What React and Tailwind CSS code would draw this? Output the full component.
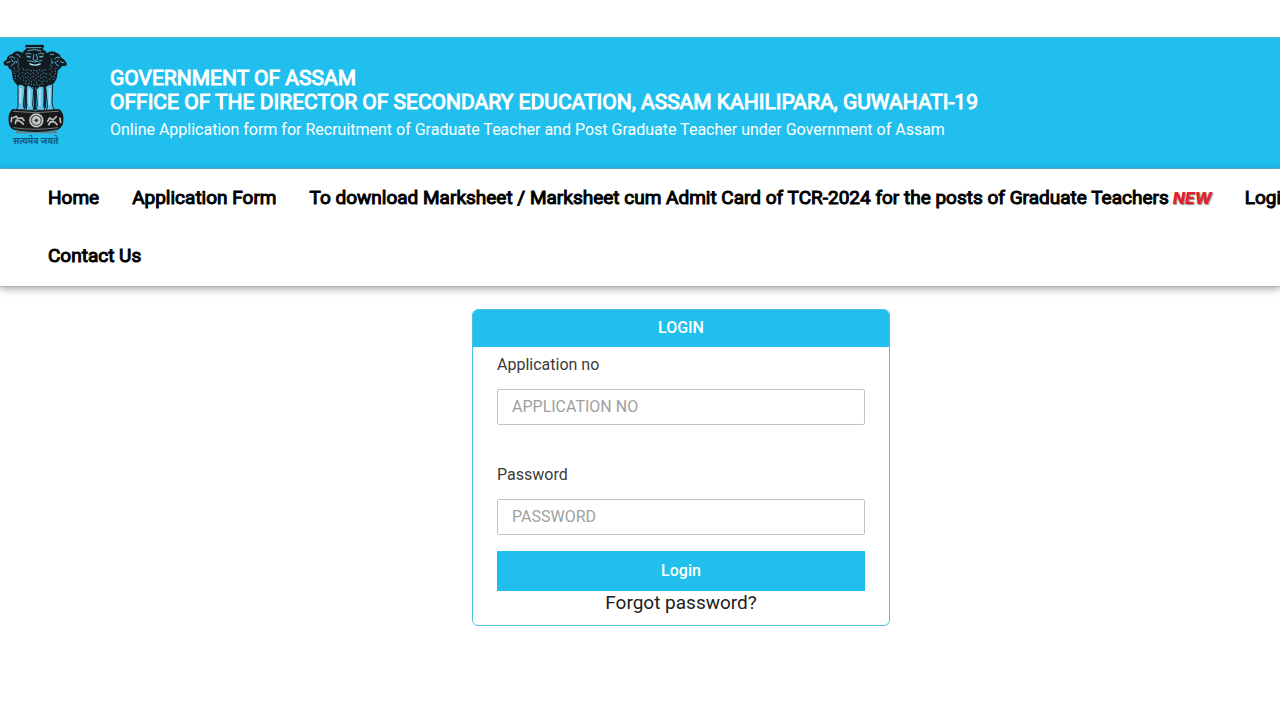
function Emblem() {
  return (
    <svg viewBox="0 30 225 330" className="h-[110px] w-[75px] shrink-0" role="img" aria-label="State Emblem of India">
      <g fill="#131b20">
        <path d="M75 47 Q78 43 90 45 L128 44 Q134 44 131 52 L128 59 Q143 63 140 76 Q148 90 140 101 Q136 111 128 113 Q104 124 78 112 Q66 106 67 94 Q59 82 69 72 Q67 62 79 57 Z" />
        <path d="M68 68 Q44 58 37 72 Q21 76 20 89 Q7 96 12 103 Q15 109 24 107 Q25 117 34 119 L39 148 Q48 170 66 170 L84 120 Z" />
        <path d="M140 69 Q159 59 169 69 Q180 70 182 81 Q194 89 200 99 Q203 110 187 107 Q182 116 174 121 L170 145 Q160 170 143 170 L122 120 Z" />
        <path d="M66 104 Q102 125 144 104 L160 137 Q156 177 142 181 L103 194 L65 181 Q48 164 49 135 Z" />
      </g>
      <g fill="#62c5ea" stroke="#15242d" strokeWidth="3">
        <path d="M54 165 Q66 159 75 172 L70 224 Q71 235 75 239 L49 240 Q57 230 54 218 Z" />
        <path d="M80 168 Q91 163 101 179 L98 225 Q103 236 99 241 L78 241 Q83 226 79 210 Z" />
        <path d="M108 179 Q119 163 132 171 L132 211 Q128 229 135 241 L111 241 Q108 233 112 225 Z" />
        <path d="M137 170 Q151 159 158 166 L156 216 Q155 231 164 239 L139 241 Q144 231 142 223 Z" />
      </g>
      <g fill="none" stroke="#58aecd" strokeWidth="3">
        <path d="M79 53 H125 M83 62 Q104 55 124 63" />
        <path d="M77 72 Q87 66 94 73 M115 73 Q122 66 132 72" />
        <path d="M80 79 L92 81 M118 81 L130 79" strokeWidth="5" />
        <path d="M102 72 L99 88 L106 92 L113 88 L109 72 M82 92 Q94 93 103 96 Q116 94 127 91" />
        <path d="M88 101 Q105 110 122 101" stroke="#a4e0ef" strokeWidth="4" />
        <path d="M28 82 Q39 76 45 86 M19 99 L32 94 M32 108 Q43 104 46 92 M49 73 Q58 73 61 83 M34 88 L40 96 M52 92 L48 100" />
        <path d="M180 83 Q171 77 164 87 M193 99 L180 95 M177 108 Q166 104 164 94 M150 74 Q157 71 162 75 M175 89 L170 97 M155 92 L159 101" />
      </g>
      <g fill="none" stroke="#4593b0" strokeWidth="3" strokeDasharray="5 5">
        <path d="M51 85 L57 90 L50 96 L59 102 L51 109 L60 116 L52 123 L60 130 L54 137 L62 144 L57 151" />
        <path d="M157 86 L151 91 L158 97 L149 104 L158 110 L149 118 L156 125 L149 132 L156 139 L148 147 L153 154" />
        <path d="M42 112 L46 120 L40 127 L48 134 L44 143 L51 151 M169 114 L164 122 L169 129 L161 136 L165 144 L157 151" />
        <path d="M68 116 L76 122 L84 117 L91 124 L100 119 L108 125 L116 119 L124 124 L132 118 L141 123" />
        <path d="M66 127 L73 133 L82 127 L90 134 L98 128 L106 135 L114 128 L122 135 L131 128 L142 133" />
        <path d="M67 138 L75 144 L83 138 L91 145 L99 138 L107 146 L116 139 L124 145 L133 138 L142 144" />
        <path d="M69 149 L77 155 L85 149 L93 156 L101 149 L109 157 L118 150 L126 156 L134 150 L143 155" />
        <path d="M75 160 L83 164 L90 159 L99 166 L108 161 L117 167 L125 161 L134 163 M96 172 L103 177 L111 172" />
      </g>
      <path d="M62 174 L61 220 M88 177 L89 228 M120 177 L119 227 M149 174 L148 224" stroke="#b5e4f2" strokeWidth="5" fill="none" />
      <path d="M105 181 V240 M76 181 V234 M135 181 V233" stroke="#14232b" strokeWidth="6" fill="none" />
      <path d="M38 237 Q106 247 177 237 Q193 248 190 273 Q190 289 174 299 Q106 313 40 299 Q26 291 26 272 Q23 249 38 237 Z" fill="#18191a" />
      <path d="M39 244 Q106 252 176 244 M40 293 Q106 303 174 293" stroke="#777" strokeWidth="3" fill="none" />
      <circle cx="109" cy="271" r="22" fill="#d2d6d7" stroke="#303334" strokeWidth="2" />
      <circle cx="109" cy="271" r="15" fill="none" stroke="#4b4e50" strokeWidth="4" />
      <path d="M109 254 V288 M92 271 H126 M97 259 L121 283 M121 259 L97 283" stroke="#999" strokeWidth="2" />
      <circle cx="109" cy="271" r="5" fill="#333" />
      <g fill="none" stroke="#bfc2c3" strokeWidth="5" strokeLinecap="round">
        <path d="M40 263 L48 259 L54 266 L66 264 L72 271 M46 280 L49 270 L62 275 L70 282 M34 275 L35 263" />
        <path d="M143 274 L149 264 L159 270 L169 260 M146 284 L152 275 L164 276 L171 284 M180 265 L182 277" />
      </g>
      <path d="M48 302 Q107 311 171 302 V310 H48 Z" fill="#707b7e" />
      <text x="107" y="341" textAnchor="middle" fontSize="26" fontWeight="700" fill="#12577b" fontFamily="'Noto Sans Devanagari', 'Noto Sans', sans-serif">सत्यमेव जयते</text>
    </svg>
  );
}

function NewBadge() {
  return (
    <span className="ml-1 inline-block w-[39px] font-[Inter,sans-serif] text-[16px] leading-5 font-extrabold text-[#e0202c] italic [-webkit-text-stroke:0] [text-shadow:1px_1px_1px_#888]">
      NEW
    </span>
  );
}

const navLinks = ['Home', 'Application Form'];

function Field({ id, label, type, placeholder }) {
  return (
    <div className="flex flex-col gap-3">
      <label htmlFor={id} className="text-[16px] leading-6 text-[#3b3b3b]">{label}</label>
      <input
        id={id}
        type={type}
        placeholder={placeholder}
        className="h-9 w-full rounded-xs border border-[#c4c4c4] bg-white px-3.5 pb-0.5 text-[16px] text-[#333] outline-none placeholder:text-[#a0a0a0]"
      />
    </div>
  );
}

export default function App() {
  return (
    <div className="min-h-screen overflow-x-hidden bg-white pt-[37px] font-[Roboto,sans-serif]">
      <header className="flex h-[132px] items-start border-y border-[#5fb5ce] bg-[#20bfee] pt-0.5 text-white">
        <Emblem />
        <div className="pt-[26px] pl-[35px] whitespace-nowrap">
          <h1 className="text-[21px] leading-6 font-normal [-webkit-text-stroke:1px_currentColor]">
            GOVERNMENT OF ASSAM
            <br />
            OFFICE OF THE DIRECTOR OF SECONDARY EDUCATION, ASSAM KAHILIPARA, GUWAHATI-19
          </h1>
          <p className="pt-1 text-[16px] leading-6">
            Online Application form for Recruitment of Graduate Teacher and Post Graduate Teacher under Government of Assam
          </p>
        </div>
      </header>

      <nav className="overflow-hidden border-b border-[#b5b5b5] pl-12 text-[19px] whitespace-nowrap text-black shadow-[0_2px_8px_rgba(0,0,0,0.35)] [-webkit-text-stroke:1px_currentColor]">
        <div className="flex h-[58px] items-center gap-[33px]">
          {navLinks.map((label) => (
            <a key={label} href="#" className="shrink-0">{label}</a>
          ))}
          <a href="#" className="shrink-0">
            To download Marksheet / Marksheet cum Admit Card of TCR-2024 for the posts of Graduate Teachers
            <NewBadge />
          </a>
          <a href="#" className="shrink-0">Login</a>
        </div>
        <div className="flex h-[59px] items-center">
          <a href="#">Contact Us</a>
        </div>
      </nav>

      <main className="flex justify-center pt-[22px] pr-4 pb-8 pl-[98px]">
        <form className="w-full max-w-[418px] overflow-hidden rounded-md border border-[#4fc1df] bg-white">
          <h2 className="bg-[#20bfee] pt-1.5 pb-[7px] text-center text-[16px] leading-6 font-medium text-white">LOGIN</h2>
          <div className="px-6 pt-1.5 pb-2.5">
            <Field id="application-no" label="Application no" type="text" placeholder="APPLICATION NO" />
            <div className="pt-[38px]">
              <Field id="password" label="Password" type="password" placeholder="PASSWORD" />
            </div>
            <button type="button" className="mt-4 h-10 w-full bg-[#20bfee] text-[16px] font-medium text-white">Login</button>
            <a href="#" className="block text-center text-[19px] leading-6 text-[#202020]">Forgot password?</a>
          </div>
        </form>
      </main>
    </div>
  );
}
